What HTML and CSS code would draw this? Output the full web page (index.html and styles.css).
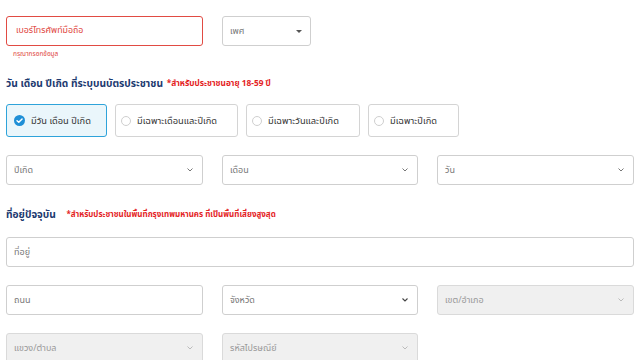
FILE: index.html
```html
<!DOCTYPE html>
<html lang="th">
<head>
<meta charset="utf-8">
<link rel="stylesheet" href="styles.css">
</head>
<body>
<div class="page">
  <div class="row-top">
    <div class="field phone-field">
      <div class="box error"><span class="ph red">เบอร์โทรศัพท์มือถือ</span></div>
      <div class="err-msg">กรุณากรอกข้อมูล</div>
    </div>
    <div class="box gender"><span class="ph">เพศ</span><span class="caret"></span></div>
  </div>

  <h2 class="heading">วัน เดือน ปีเกิด ที่ระบุบนบัตรประชาชน <span class="note big">*สำหรับประชาชนอายุ 18-59 ปี</span></h2>

  <div class="options">
    <div class="opt selected">
      <svg class="ico" viewBox="0 0 12 12" width="11" height="11"><circle cx="6" cy="6" r="6" fill="#1f8fd6"/><path d="M3.3 6.2 L5.2 8 L8.8 4.3" fill="none" stroke="#fff" stroke-width="1.6" stroke-linecap="round" stroke-linejoin="round"/></svg>
      <span>มีวัน เดือน ปีเกิด</span>
    </div>
    <div class="opt w2"><span class="radio"></span><span>มีเฉพาะเดือนและปีเกิด</span></div>
    <div class="opt w3"><span class="radio"></span><span>มีเฉพาะวันและปีเกิด</span></div>
    <div class="opt w4"><span class="radio"></span><span>มีเฉพาะปีเกิด</span></div>
  </div>

  <div class="grid3 dates">
    <div class="box"><span class="ph">ปีเกิด</span><svg class="chev" viewBox="0 0 6 4" width="6" height="4"><path d="M0.5 0.5 L3 3 L5.5 0.5" fill="none" stroke="#777" stroke-width="1"/></svg></div>
    <div class="box"><span class="ph">เดือน</span><svg class="chev" viewBox="0 0 6 4" width="6" height="4"><path d="M0.5 0.5 L3 3 L5.5 0.5" fill="none" stroke="#777" stroke-width="1"/></svg></div>
    <div class="box"><span class="ph">วัน</span><svg class="chev" viewBox="0 0 6 4" width="6" height="4"><path d="M0.5 0.5 L3 3 L5.5 0.5" fill="none" stroke="#777" stroke-width="1"/></svg></div>
  </div>

  <h2 class="heading addr">ที่อยู่ปัจจุบัน <span class="note">*สำหรับประชาชนในพื้นที่กรุงเทพมหานคร ที่เป็นพื้นที่เสี่ยงสูงสุด</span></h2>

  <div class="box full"><span class="ph">ที่อยู่</span></div>

  <div class="grid3 r1">
    <div class="box"><span class="ph">ถนน</span></div>
    <div class="box"><span class="ph">จังหวัด</span><svg class="chev" viewBox="0 0 6 4" width="6" height="4"><path d="M0.5 0.5 L3 3 L5.5 0.5" fill="none" stroke="#444" stroke-width="1.1"/></svg></div>
    <div class="box disabled"><span class="ph">เขต/อำเภอ</span><svg class="chev" viewBox="0 0 6 4" width="6" height="4"><path d="M0.5 0.5 L3 3 L5.5 0.5" fill="none" stroke="#bbb" stroke-width="1"/></svg></div>
  </div>
  <div class="grid3 r2">
    <div class="box disabled"><span class="ph">แขวง/ตำบล</span><svg class="chev" viewBox="0 0 6 4" width="6" height="4"><path d="M0.5 0.5 L3 3 L5.5 0.5" fill="none" stroke="#bbb" stroke-width="1"/></svg></div>
    <div class="box disabled"><span class="ph">รหัสไปรษณีย์</span><svg class="chev" viewBox="0 0 6 4" width="6" height="4"><path d="M0.5 0.5 L3 3 L5.5 0.5" fill="none" stroke="#bbb" stroke-width="1"/></svg></div>
  </div>
</div>
</body>
</html>
```
FILE: styles.css
```css
* { box-sizing: border-box; }
html, body { margin: 0; padding: 0; background: #fff; }
body {
  font-family: "Noto Sans Thai", "Noto Sans", "DejaVu Sans", sans-serif;
  color: #333;
  overflow: hidden;
}
.page { padding: 16px 6px 0 6px; width: 640px; }

.box {
  height: 30px;
  border: 1px solid #cfcfcf;
  border-radius: 3px;
  background: #fff;
  display: flex;
  align-items: center;
  justify-content: space-between;
  padding: 0 9px 0 7px;
}
.ph { font-size: 9px; color: #777; line-height: 1; }
.ph.red { color: #e0453d; font-size: 8.8px; margin-left: 2px; }
.box.error { border-color: #e14b43; border-width: 1.5px; }
.box.disabled { background: #f0f0f0; border-color: #dadada; }
.box.disabled .ph { color: #999; }

.row-top { display: flex; gap: 19px; align-items: flex-start; height: 48px; }
.phone-field { width: 197px; }
.err-msg { font-size: 6.5px; color: #e0453d; margin: 5px 0 0 7px; line-height: 1; }
.gender { width: 89px; padding-right: 8px; }
.caret {
  width: 0; height: 0;
  border-left: 3px solid transparent;
  border-right: 3px solid transparent;
  border-top: 3px solid #555;
}

.heading {
  margin: 12px 0 0 0;
  font-size: 10.2px;
  font-weight: 700;
  color: #1d3a70;
  line-height: 16px;
  height: 16px;
  white-space: nowrap;
}
.note { font-size: 8px; color: #e4231f; font-weight: 700; margin-left: 1px; vertical-align: 1px; }
.note.big { font-size: 8.3px; }

.options { display: flex; gap: 8px; margin-top: 12px; }
.opt {
  height: 33px;
  border: 1px solid #d4d4d4;
  border-radius: 3px;
  display: flex;
  align-items: center;
  gap: 6px;
  padding-left: 7px;
  font-size: 9.3px;
  color: #333;
  width: 101px;
  background: #fff;
}
.opt.selected { background: #eaf6fb; border: 1.5px solid #2ea3da; }
.opt.w2 { width: 123px; padding-left: 5px; }
.opt.w3 { width: 114px; padding-left: 5px; }
.opt.w4 { width: 91px; padding-left: 5px; }
.radio {
  width: 10px; height: 10px; border-radius: 50%;
  border: 1px solid #cfcfcf; background: #fff; flex: none;
}
.ico { flex: none; }

.grid3 { display: grid; grid-template-columns: 197px 196px 197px; column-gap: 19px; }
.dates { margin-top: 18px; }
.chev { flex: none; }

.heading.addr { margin-top: 22px; }
.heading.addr .note { margin-left: 8px; }

.full { margin-top: 14px; width: 628px; }
.r1 { margin-top: 18px; }
.r2 { margin-top: 18px; }
```
